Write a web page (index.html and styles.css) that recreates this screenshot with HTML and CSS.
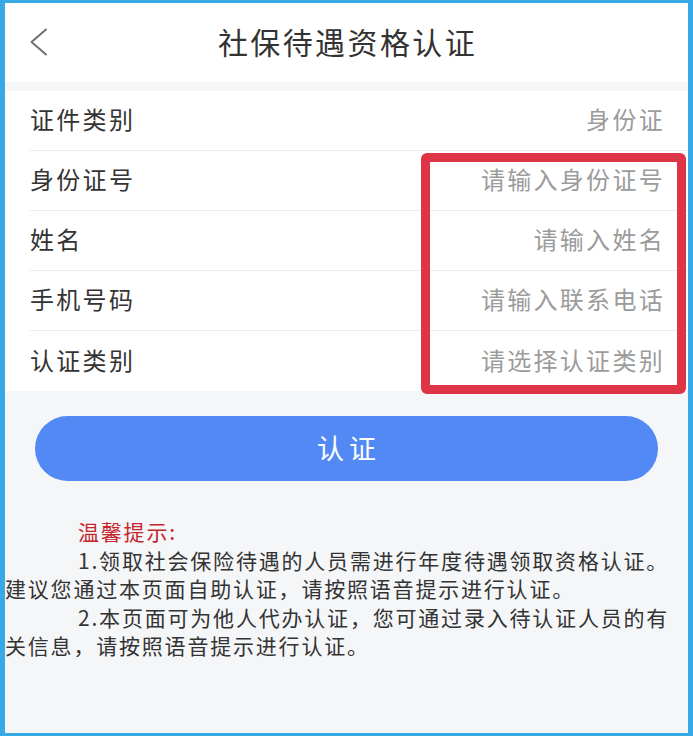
FILE: index.html
```html
<!DOCTYPE html>
<html lang="zh-CN">
<head>
<meta charset="utf-8">
<title>社保待遇资格认证</title>
<link rel="stylesheet" href="styles.css">
</head>
<body>
<div class="screen">
  <div class="viewport">
    <header class="topbar">
      <span class="back">
        <svg width="20" height="28" viewBox="0 0 20 28" aria-hidden="true">
          <polyline points="17,1.5 2.5,14 17,26.5" fill="none" stroke="#707070" stroke-width="2" stroke-linecap="round" stroke-linejoin="round"/>
        </svg>
      </span>
      <h1 class="title">社保待遇资格认证</h1>
      <span></span>
    </header>

    <ul class="form">
      <li class="row"><span class="label">证件类别</span><span class="value">身份证</span></li>
      <li class="row"><span class="label">身份证号</span><span class="value">请输入身份证号</span></li>
      <li class="row"><span class="label">姓名</span><span class="value">请输入姓名</span></li>
      <li class="row"><span class="label">手机号码</span><span class="value">请输入联系电话</span></li>
      <li class="row"><span class="label">认证类别</span><span class="value">请选择认证类别</span></li>
    </ul>

    <button class="submit" type="button">认证</button>

    <section class="tips">
      <div class="tips-title">温馨提示:</div>
      <p class="tip">1.领取社会保险待遇的人员需进行年度待遇领取资格认证。建议您通过本页面自助认证，请按照语音提示进行认证。</p>
      <p class="tip">2.本页面可为他人代办认证，您可通过录入待认证人员的有关信息，请按照语音提示进行认证。</p>
    </section>

    <div class="highlight"></div>
  </div>
</div>
</body>
</html>
```

FILE: styles.css
```css
* {
  box-sizing: border-box;
}

html, body {
  margin: 0;
  padding: 0;
  background: #37a9e6;
}

body {
  font-family: "Noto Sans CJK SC", "Noto Sans", sans-serif;
  color: #333;
}

.screen {
  width: 693px;
  height: 736px;
  border-style: solid;
  border-color: #37a9e6;
  border-width: 3px 5px 3px 5px;
}

.viewport {
  position: relative;
  height: 100%;
  overflow: hidden;
  background: #f5f6f8;
}

.topbar {
  height: 79px;
  background: #fff;
  display: grid;
  grid-template-columns: 1fr auto 1fr;
  align-items: center;
  padding-bottom: 3px;
}

.back {
  display: flex;
  align-items: center;
  padding-left: 24px;
  margin-top: 1px;
}

.title {
  margin: 0;
  font-size: 30px;
  font-weight: 400;
  letter-spacing: 2.4px;
  padding-left: 2px;
  color: #333;
  line-height: 1;
}

.form {
  list-style: none;
  margin: 9px 0 0;
  padding: 0;
  background: #fff;
}

.row {
  height: 60px;
  margin-left: 25px;
  padding-right: 23px;
  padding-bottom: 4px;
  display: flex;
  align-items: center;
  justify-content: space-between;
  border-bottom: 1px solid #ececec;
}

.row:last-child {
  border-bottom: none;
}

.label {
  font-size: 24px;
  letter-spacing: 2.3px;
  color: #333;
}

.value {
  font-size: 24px;
  letter-spacing: 2.3px;
  color: #9b9b9b;
}

.submit {
  display: block;
  width: calc(100% - 60px);
  height: 65px;
  margin: 25px 30px 0;
  border: none;
  border-radius: 33px;
  background: #5289f4;
  color: #fff;
  font-family: "Noto Sans CJK SC", "Noto Sans", sans-serif;
  font-size: 27px;
  letter-spacing: 5px;
  padding: 0 0 3px 5px;
}

.tips {
  margin-top: 36px;
  line-height: 28.5px;
  font-size: 21px;
  letter-spacing: 1.8px;
  color: #333;
}

.tips-title {
  color: #c4262e;
  padding-left: 73px;
}

.tip {
  margin: 0;
  width: 667px;
  text-indent: 73px;
}

.highlight {
  position: absolute;
  left: 416px;
  top: 150px;
  width: 265px;
  height: 241px;
  border: 9px solid #de3445;
  border-radius: 6px;
}
```
